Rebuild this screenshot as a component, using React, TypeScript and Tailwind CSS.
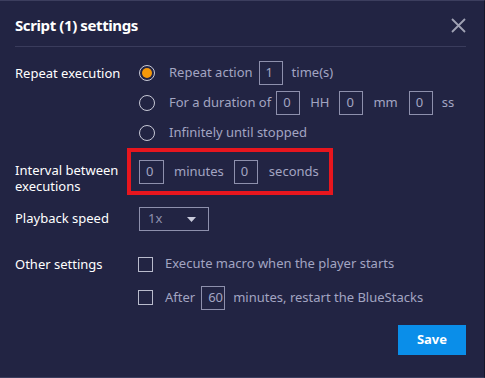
const font = { fontFamily: '"Noto Sans", "Open Sans", sans-serif' };

function Radio({ checked }: { checked?: boolean }) {
  return (
    <span className="flex size-4 shrink-0 items-center justify-center rounded-full border-[1.5px] border-[#c8c9d6]">
      {checked && <span className="size-[10px] rounded-full bg-[#f5990a]" />}
    </span>
  );
}

function Box({ value, w = "w-6" }: { value: string; w?: string }) {
  return (
    <span
      className={`flex h-6 ${w} shrink-0 items-center border border-[#8e90ad] pl-[6px] text-[13px] text-[#a3a5c2]`}
    >
      {value}
    </span>
  );
}

function Check() {
  return <span className="size-[15px] shrink-0 border-[1.5px] border-[#b9bbcc]" />;
}

export default function App() {
  return (
    <div
      style={font}
      className="flex h-[378px] w-[485px] flex-col border-t border-r border-b border-t-[#3c3e5e] border-r-[#15162b] border-b-[#3c3e5e] bg-[#222443] text-[13px] text-[#a3a5c2]"
    >
      <div className="mx-[15px] mr-[18px] flex h-[46px] shrink-0 items-center justify-between border-b border-[#3a3c5c] pt-[3px]">
        <h1 className="text-[15px] font-bold tracking-[-0.4px] text-white">Script (1) settings</h1>
        <svg width="15" height="15" viewBox="0 0 15 15" className="text-[#a0a2b4]">
          <path d="M1 1L14 14M14 1L1 14" stroke="currentColor" strokeWidth="1.8" />
        </svg>
      </div>

      <div className="flex flex-1 flex-col pl-[15px] pr-[18px]">
        <div className="mt-[11px] flex">
          <div className="w-[124px] shrink-0 pt-[6px] text-white">Repeat execution</div>
          <div className="flex flex-col">
            <div className="flex h-[30px] items-center">
              <Radio checked />
              <span className="ml-[14px]">Repeat action</span>
              <span className="ml-[6px]"><Box value="1" /></span>
              <span className="ml-[9px]">time(s)</span>
            </div>
            <div className="flex h-[30px] items-center">
              <Radio />
              <span className="ml-[14px]">For a duration of</span>
              <span className="ml-[5px]"><Box value="0" /></span>
              <span className="ml-[10px]">HH</span>
              <span className="ml-[10px]"><Box value="0" /></span>
              <span className="ml-[10px]">mm</span>
              <span className="ml-[11px]"><Box value="0" /></span>
              <span className="ml-[9px]">ss</span>
            </div>
            <div className="flex h-[30px] items-center">
              <Radio />
              <span className="ml-[14px]">Infinitely until stopped</span>
            </div>
          </div>
        </div>

        <div className="flex items-start">
          <div className="w-[112px] shrink-0 pt-[14px] leading-[16px] text-white">
            Interval between executions
          </div>
          <div className="flex h-[47px] items-center border-4 border-[#e8161e] pl-[8px] pr-[10px]">
            <Box value="0" w="w-[25px]" />
            <span className="ml-[10px]">minutes</span>
            <span className="ml-[10px]"><Box value="0" /></span>
            <span className="ml-[11px]">seconds</span>
          </div>
        </div>

        <div className="mt-[12px] flex items-center">
          <div className="w-[124px] shrink-0 text-white">Playback speed</div>
          <div className="flex h-6 w-[70px] items-center justify-between border border-[#8e90ad] pl-[8px] pr-[12px] text-[#8e90ad]">
            <span>1x</span>
            <svg width="9" height="5" viewBox="0 0 9 5">
              <path d="M0 0H9L4.5 5Z" fill="#c9cbdc" />
            </svg>
          </div>
        </div>

        <div className="mt-[23px] flex items-start">
          <div className="w-[123px] shrink-0 leading-[20px] text-white">Other settings</div>
          <div className="flex flex-col gap-[11px]">
            <div className="flex h-[20px] items-center">
              <Check />
              <span className="ml-[12px]">Execute macro when the player starts</span>
            </div>
            <div className="flex h-[25px] items-center">
              <Check />
              <span className="ml-[12px]">After</span>
              <span className="ml-[6px]"><Box value="60" /></span>
              <span className="ml-[8px]">minutes, restart the BlueStacks</span>
            </div>
          </div>
        </div>

        <div className="mt-[15px] flex justify-end">
          <button className="h-[30px] w-[68px] bg-[#0a8ee9] text-[13px] font-bold text-white">
            Save
          </button>
        </div>
      </div>
    </div>
  );
}
